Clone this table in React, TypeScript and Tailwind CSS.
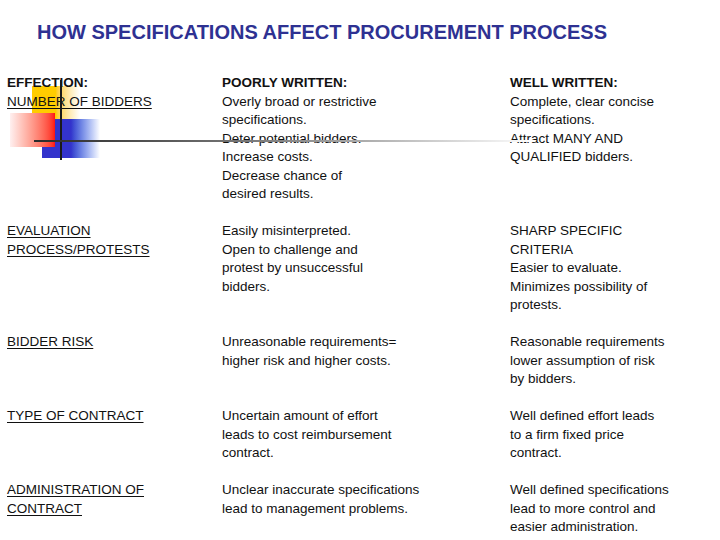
import React from 'react';

type Row = { effect: string[]; poor: string[]; well: string[] };

const rows: Row[] = [
  {
    effect: ['EVALUATION', 'PROCESS/PROTESTS'],
    poor: ['Easily misinterpreted.', 'Open to challenge and', 'protest by unsuccessful', 'bidders.'],
    well: ['SHARP SPECIFIC', 'CRITERIA', 'Easier to evaluate.', 'Minimizes possibility of', 'protests.'],
  },
  {
    effect: ['BIDDER RISK'],
    poor: ['Unreasonable requirements=', 'higher risk and higher costs.'],
    well: ['Reasonable requirements', 'lower assumption of risk', 'by bidders.'],
  },
  {
    effect: ['TYPE OF CONTRACT'],
    poor: ['Uncertain amount of effort', 'leads to cost reimbursement', 'contract.'],
    well: ['Well defined effort leads', 'to a firm fixed price', 'contract.'],
  },
  {
    effect: ['ADMINISTRATION OF', 'CONTRACT'],
    poor: ['Unclear inaccurate specifications', 'lead to management problems.'],
    well: ['Well defined specifications', 'lead to more control and', 'easier administration.'],
  },
];

const Lines = ({ lines, underline }: { lines: string[]; underline?: boolean }) => (
  <div>
    {lines.map((l, i) => (
      <div key={i}>
        <span className={underline ? 'underline decoration-1 underline-offset-2' : ''}>{l}</span>
      </div>
    ))}
  </div>
);

export default function App() {
  return (
    <div className="relative w-[720px] h-[540px] overflow-hidden bg-white font-['Liberation_Sans',Arial,sans-serif] text-[13.5px] leading-[18.5px] text-[#111]">
      {/* decorative squares behind the text */}
      <div className="absolute left-[32px] top-[86px] w-[48px] h-[34px] bg-gradient-to-r from-[#ffcc00] via-[#ffcc00] to-white" />
      <div className="absolute left-[42px] top-[119px] w-[58px] h-[39px] bg-gradient-to-r from-[#3333cc] via-[#3333cc] to-white" />
      <div className="absolute left-[10px] top-[113px] w-[45px] h-[34px] bg-gradient-to-r from-[#fff0f0] to-[#ff1010]" />

      <div className="relative z-10">
        <h1 className="pl-[37px] pt-[20px] h-[74px] text-[20px] leading-[24px] font-bold text-[#2e3192]">
          HOW SPECIFICATIONS AFFECT PROCUREMENT PROCESS
        </h1>

        <div className="grid grid-cols-[215px_288px_1fr] pl-[7px] gap-y-[18.5px]">
          <div>
            <div className="font-bold">EFFECTION:</div>
            <Lines lines={['NUMBER OF BIDDERS']} underline />
          </div>
          <div>
            <div className="font-bold">POORLY WRITTEN:</div>
            <Lines
              lines={[
                'Overly broad or restrictive',
                'specifications.',
                'Deter potential bidders.',
                'Increase costs.',
                'Decrease chance of',
                'desired results.',
              ]}
            />
          </div>
          <div>
            <div className="font-bold">WELL WRITTEN:</div>
            <Lines
              lines={['Complete, clear concise', 'specifications.', 'Attract MANY AND', 'QUALIFIED bidders.']}
            />
          </div>

          {rows.map((r, i) => (
            <React.Fragment key={i}>
              <Lines lines={r.effect} underline />
              <Lines lines={r.poor} />
              <Lines lines={r.well} />
            </React.Fragment>
          ))}
        </div>
      </div>

      {/* lines drawn over the text */}
      <div className="absolute z-20 left-[60px] top-[80px] w-[2px] h-[80px] bg-[#1a1a1a]" />
      <div className="absolute z-20 left-[34px] top-[140px] w-[500px] h-[2px] bg-gradient-to-r from-[#2a2a2a] via-[#888] to-white" />
    </div>
  );
}
